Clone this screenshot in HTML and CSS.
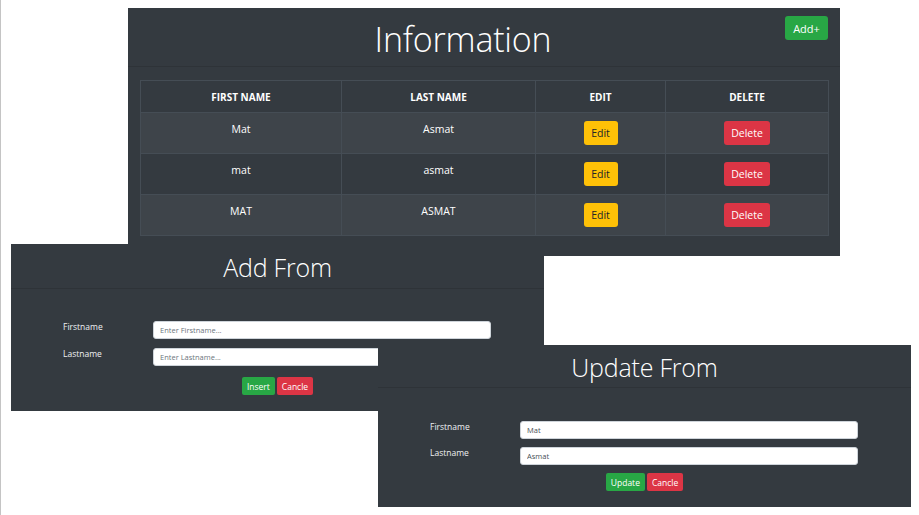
FILE: index.html
```html
<!DOCTYPE html>
<html lang="en">
<head>
<meta charset="utf-8">
<title>Information</title>
<link rel="stylesheet" href="styles.css">
</head>
<body>
<div class="desk">
  <section class="win win-info">
    <header class="win-head head-info">
      <h1 class="win-title title-lg">Information</h1>
      <button class="btn btn-green btn-add">Add+</button>
    </header>
    <div class="info-body">
      <table class="grid">
        <colgroup><col class="c1"><col class="c2"><col class="c3"><col class="c4"></colgroup>
        <thead>
          <tr><th>FIRST NAME</th><th>LAST NAME</th><th>EDIT</th><th>DELETE</th></tr>
        </thead>
        <tbody>
          <tr class="stripe"><td>Mat</td><td>Asmat</td><td><button class="btn btn-yellow btn-row">Edit</button></td><td><button class="btn btn-red btn-row">Delete</button></td></tr>
          <tr><td>mat</td><td>asmat</td><td><button class="btn btn-yellow btn-row">Edit</button></td><td><button class="btn btn-red btn-row">Delete</button></td></tr>
          <tr class="stripe"><td>MAT</td><td>ASMAT</td><td><button class="btn btn-yellow btn-row">Edit</button></td><td><button class="btn btn-red btn-row">Delete</button></td></tr>
        </tbody>
      </table>
    </div>
  </section>

  <section class="win win-add">
    <header class="win-head head-add">
      <h2 class="win-title title-md">Add From</h2>
    </header>
    <div class="form form-add">
      <div class="frow"><label class="lbl">Firstname</label><input class="inp" type="text" placeholder="Enter Firstname..."></div>
      <div class="frow"><label class="lbl">Lastname</label><input class="inp" type="text" placeholder="Enter Lastname..."></div>
      <div class="actions actions-add">
        <button class="btn btn-green btn-sm">Insert</button>
        <button class="btn btn-red btn-sm">Cancle</button>
      </div>
    </div>
  </section>

  <section class="win win-upd">
    <header class="win-head head-upd">
      <h2 class="win-title title-md">Update From</h2>
    </header>
    <div class="form form-upd">
      <div class="frow"><label class="lbl">Firstname</label><input class="inp" type="text" value="Mat"></div>
      <div class="frow"><label class="lbl">Lastname</label><input class="inp" type="text" value="Asmat"></div>
      <div class="actions actions-upd">
        <button class="btn btn-green btn-sm">Update</button>
        <button class="btn btn-red btn-sm">Cancle</button>
      </div>
    </div>
  </section>
</div>
</body>
</html>
```

FILE: styles.css
```css
html, body {
  margin: 0;
  padding: 0;
  background: #ffffff;
}

body {
  font-family: "Open Sans", "Noto Sans", "Liberation Sans", sans-serif;
  color: #ffffff;
}

.desk {
  position: relative;
  width: 919px;
  height: 515px;
  overflow: hidden;
  border-left: 1px solid #c4c4c4;
  box-sizing: border-box;
}

/* windows placed on the free canvas */
.win {
  position: absolute;
  background: #343a40;
  color: #ffffff;
  display: flex;
  flex-direction: column;
  box-sizing: border-box;
}

.win-info { left: 127px; top: 8px;   width: 712px; height: 248px; z-index: 1; }
.win-add  { left: 10px;  top: 244px; width: 533px; height: 167px; z-index: 2; }
.win-upd  { left: 377px; top: 345px; width: 533px; height: 162px; z-index: 3; }

.win-head {
  position: relative;
  display: flex;
  align-items: center;
  justify-content: center;
  border-bottom: 1px solid #2e3338;
  box-sizing: border-box;
  flex: none;
}

.head-info { height: 59px; padding-right: 42px; }
.head-add  { height: 45px; }
.head-upd  { height: 43px; }

.win-title {
  margin: 0;
  font-weight: 300;
  color: #ffffff;
  letter-spacing: -0.2px;
}

.title-lg { font-size: 34px; line-height: 40px; margin-top: 4px; }
.title-md { font-size: 25px; line-height: 30px; margin-top: 2px; }

/* buttons */
.btn {
  border: 0;
  border-radius: 3px;
  font-family: "Open Sans", "Noto Sans", "Liberation Sans", sans-serif;
  cursor: pointer;
  padding: 0;
  display: inline-flex;
  align-items: center;
  justify-content: center;
}

.btn-green  { background: #28a745; color: #ffffff; }
.btn-red    { background: #dc3545; color: #ffffff; }
.btn-yellow { background: #ffc107; color: #212529; }

.btn-add {
  position: absolute;
  right: 12px;
  top: 8px;
  width: 43px;
  height: 24px;
  font-size: 11px;
}

/* table */
.info-body {
  padding: 13px 12px 0 12px;
}

.grid {
  width: 688px;
  border-collapse: collapse;
  table-layout: fixed;
}

.c1 { width: 201px; }
.c2 { width: 194px; }
.c3 { width: 130px; }
.c4 { width: 163px; }

.grid th,
.grid td {
  border: 1px solid #454d55;
  text-align: center;
  color: #ffffff;
}

.grid th {
  font-size: 10px;
  font-weight: 700;
  line-height: 16px;
  padding: 8px 6px 7px;
  height: 16px;
}

.grid td {
  font-size: 10.5px;
  line-height: 18px;
  padding: 7px 6px 8px;
  vertical-align: top;
}

.grid tr.stripe td {
  background: #3e444a;
}

.btn-row {
  height: 24px;
  margin-top: 1px;
  font-size: 10.5px;
  padding: 0 8px;
}

.btn-yellow.btn-row { width: 34px; }
.btn-red.btn-row    { width: 46px; }

/* forms */
.form {
  display: flex;
  flex-direction: column;
}

.form-add { padding-top: 32px; gap: 9px; }
.form-upd { padding-top: 33px; gap: 8px; }

.frow {
  display: flex;
  align-items: flex-start;
  padding-left: 52px;
}

.lbl {
  width: 90px;
  flex: none;
  font-size: 8.5px;
  line-height: 12px;
  color: #eef0f2;
}

.inp {
  width: 338px;
  height: 18px;
  box-sizing: border-box;
  border: 1px solid #ced4da;
  border-radius: 3px;
  background: #ffffff;
  font-family: "Open Sans", "Noto Sans", "Liberation Sans", sans-serif;
  font-size: 7.5px;
  color: #495057;
  padding: 0 6px;
  margin: 0;
  outline: none;
}

.inp::placeholder {
  color: #6c757d;
}

.actions {
  display: flex;
  justify-content: center;
  gap: 2px;
}

.actions-add { margin-top: 2px; }
.actions-upd { margin-top: 0; }

.btn-sm {
  height: 18px;
  font-size: 8.5px;
  padding: 0 5px;
  border-radius: 2px;
}
```
